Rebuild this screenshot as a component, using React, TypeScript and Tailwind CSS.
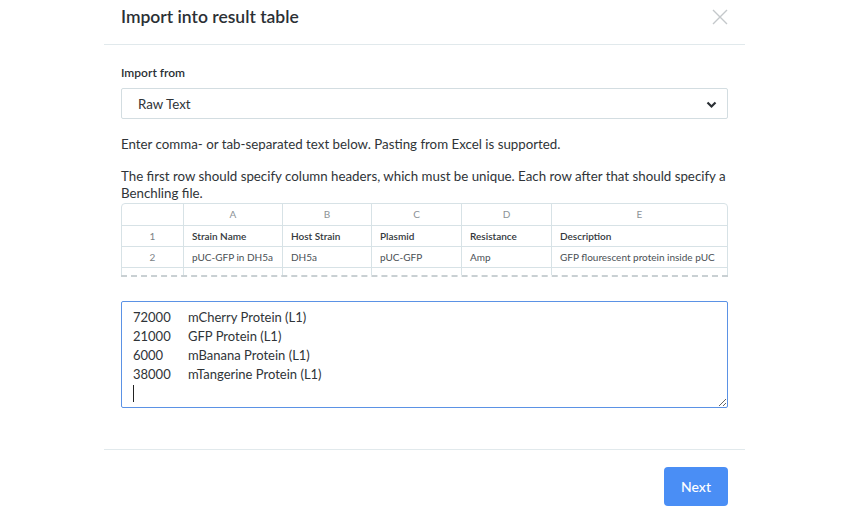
import React from 'react';

const cols = [
  { w: 'w-[62px]', h: '' },
  { w: 'w-[99px]', h: 'A' },
  { w: 'w-[89px]', h: 'B' },
  { w: 'w-[90px]', h: 'C' },
  { w: 'w-[90px]', h: 'D' },
  { w: 'flex-1', h: 'E' },
];

const rows = [
  ['1', 'Strain Name', 'Host Strain', 'Plasmid', 'Resistance', 'Description'],
  ['2', 'pUC-GFP in DH5a', 'DH5a', 'pUC-GFP', 'Amp', 'GFP flourescent protein inside pUC'],
  ['3', '', '', '', '', ''],
];

const pasted = '72000\tmCherry Protein (L1)\n21000\tGFP Protein (L1)\n6000\tmBanana Protein (L1)\n38000\tmTangerine Protein (L1)\n';

function SampleTable() {
  return (
    <div className="relative mt-[1px] h-[76px] overflow-hidden">
      <div className="rounded-t-[4px] border border-[#d7e2e6] text-[10px] text-[#4a5055]">
        {/* column letters */}
        <div className="flex h-[22px] border-b border-[#d7e2e6]">
          {cols.map((c, i) => (
            <div
              key={i}
              className={`${c.w} flex items-center justify-center text-[#8c9296] ${i < cols.length - 1 ? 'border-r border-[#d7e2e6]' : ''}`}
            >
              {c.h}
            </div>
          ))}
        </div>
        {rows.map((r, ri) => (
          <div key={ri} className="flex h-[21px] border-b border-[#d7e2e6]">
            {r.map((cell, ci) => (
              <div
                key={ci}
                className={`${cols[ci].w} flex items-center ${ci === 0 ? 'justify-center text-[#7c8286]' : 'pl-[8px]'} ${ri === 0 && ci > 0 ? 'font-semibold text-[#33383c]' : ''} ${ci < cols.length - 1 ? 'border-r border-[#d7e2e6]' : ''}`}
              >
                {cell}
              </div>
            ))}
          </div>
        ))}
      </div>
      {/* fade-out edge */}
      <div className="absolute bottom-0 left-0 right-0 h-[4px] bg-white border-t-2 border-dashed border-[#c9d0d3]" />
    </div>
  );
}

export default function App() {
  return (
    <div className="min-h-[515px] bg-white font-['Lato','Open_Sans',sans-serif] text-[#2f3438]">
      <div className="mx-auto w-[641px] bg-white">
        {/* Header */}
        <div className="flex h-[45px] items-center justify-between border-b border-[#e1e9ec] pb-[10px] pl-[17px] pr-[17px]">
          <h1 className="text-[17.5px] font-semibold text-[#2b3035]">Import into result table</h1>
          <button className="flex h-4 w-4 items-center justify-center">
            <svg width="16" height="16" viewBox="0 0 16 16" fill="none" stroke="#c4c8cb" strokeWidth="1.4">
              <path d="M1 1L15 15M15 1L1 15" />
            </svg>
          </button>
        </div>

        {/* Body */}
        <div className="border-b border-[#e1e9ec] pb-[41px] pl-[17px] pr-[17px] pt-[20px]">
          <label className="block h-4 text-[12px] font-semibold leading-4 text-[#2b3035]">Import from</label>
          <div className="mt-[7px] flex h-[31px] items-center justify-between rounded-[2px] border border-[#d3dde1] pl-[16px] pr-[10px] pt-[2px] text-[13.3px]">
            <span>Raw Text</span>
            <svg width="11" height="8" viewBox="0 0 11 8" fill="none" stroke="#2b3035" strokeWidth="2.2">
              <path d="M1.5 1.5L5.5 5.5L9.5 1.5" />
            </svg>
          </div>
          <p className="mt-[17px] text-[13.3px] leading-[17px]">
            Enter comma- or tab-separated text below. Pasting from Excel is supported.
          </p>
          <p className="mt-[15px] text-[13.3px] leading-[17px]">
            <span className="whitespace-nowrap">
              The first row should specify column headers, which must be unique. Each row after that should specify a
            </span>
            <br />
            Benchling file.
          </p>
          <SampleTable />
          <div className="relative mt-[22px]">
            <textarea
              readOnly
              defaultValue={pasted}
              className="block h-[107px] w-full resize-y rounded-[2px] border border-[#5b92e5] px-[11px] pt-[6px] text-[13px] leading-[19px] text-[#2f3438] outline-none [tab-size:55px]"
            />
            {/* caret */}
            <div className="absolute left-[12px] top-[84px] h-[17px] w-px bg-[#222]" />
          </div>
        </div>

        {/* Footer */}
        <div className="flex justify-end pr-[17px] pt-[17px]">
          <button className="h-[39px] w-[64px] rounded-[4px] bg-[#4a8ef5] text-[14px] font-medium text-white">
            Next
          </button>
        </div>
      </div>
    </div>
  );
}
